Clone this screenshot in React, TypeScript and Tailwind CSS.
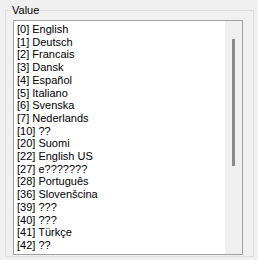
const languages = [
  "[0] English",
  "[1] Deutsch",
  "[2] Francais",
  "[3] Dansk",
  "[4] Español",
  "[5] Italiano",
  "[6] Svenska",
  "[7] Nederlands",
  "[10] ??",
  "[20] Suomi",
  "[22] English US",
  "[27] e???????",
  "[28] Português",
  "[36] Slovenšcina",
  "[39] ???",
  "[40] ???",
  "[41] Türkçe",
  "[42] ??",
];

export default function App() {
  return (
    <div className="w-[258px] h-[260px] overflow-hidden bg-[#f0f0f0] pt-[4px] text-[11px] leading-[13px] text-black font-['Liberation_Sans',Arial,sans-serif]">
      <fieldset className="mx-[5px] h-[253px] border border-[#dcdcdc] pl-[7px] pr-[10px]">
        <legend className="-ml-[2px] px-[1px]">Value</legend>
        <div className="mt-[3px] flex h-[235px] w-[230px] border border-[#a0a0a0] bg-white">
          <ul className="flex-1 overflow-hidden pl-[3px] pt-[2px] leading-[12.7px]">
            {languages.map(lang => (
              <li key={lang} className="whitespace-nowrap">{lang}</li>
            ))}
          </ul>
          <div className="flex w-[17px] justify-center bg-[#f0f0f0]">
            <div className="mt-[18px] h-[127px] w-[3px] bg-[#8a8a8a]" />
          </div>
        </div>
      </fieldset>
    </div>
  );
}
